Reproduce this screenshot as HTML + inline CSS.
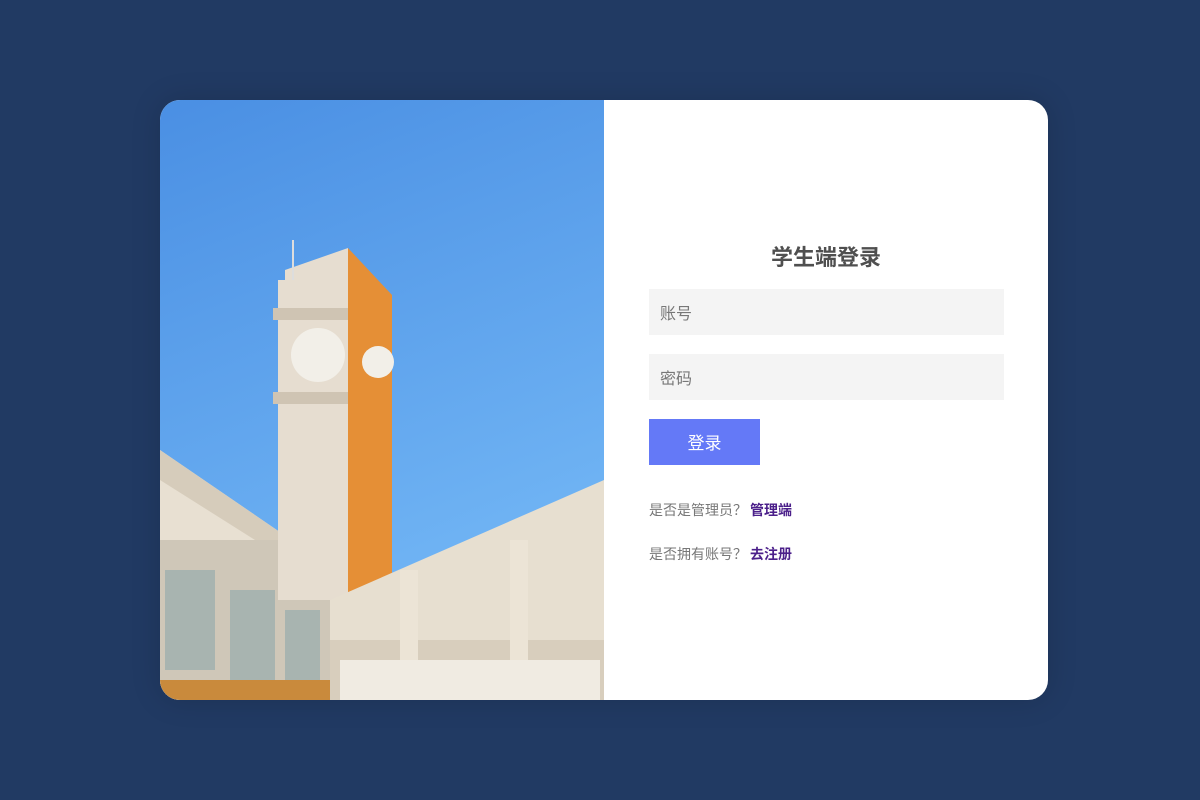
<!DOCTYPE html>
<html><head><meta charset="utf-8"><style>
html,body{margin:0;padding:0;width:1200px;height:800px;background:#213a63;overflow:hidden;font-family:"Liberation Sans","Noto Sans CJK SC",sans-serif;}
.card{position:absolute;left:160px;top:100px;width:888px;height:600px;border-radius:20px;overflow:hidden;background:#fff;box-shadow:0 0 30px rgba(0,0,0,.15);}
.pic{position:absolute;left:0;top:0;width:444px;height:600px;}
.title{position:absolute;left:444px;width:444px;top:140px;text-align:center;font-size:22px;font-weight:bold;color:#4f4f4f;}
.inp{position:absolute;left:489px;width:355px;height:46px;background:#f4f4f4;color:#777;font-size:16px;line-height:52px;text-indent:11px;}
.btn{position:absolute;left:489px;top:319px;width:111px;height:46px;background:#6479f7;color:#fff;font-size:17px;text-align:center;line-height:50px;}
.t{position:absolute;left:489px;font-size:14px;color:#777;}
.t b{color:#4b1f8a;margin-left:3px;}
</style></head><body>
<div class="card">
<svg class="pic" viewBox="0 0 444 600" width="444" height="600">
<defs><linearGradient id="s" x1="0" y1="0" x2="0.3" y2="1"><stop offset="0" stop-color="#4a8fe3"/><stop offset="1" stop-color="#74b8f6"/></linearGradient></defs>
<rect width="444" height="600" fill="url(#s)"/>
<polygon points="0,350 190,480 190,600 0,600" fill="#e8e0d2"/>
<polygon points="0,350 190,480 190,500 0,380" fill="#d6ccbb"/>
<rect x="0" y="440" width="170" height="160" fill="#cfc7b8"/>
<rect x="5" y="470" width="50" height="100" fill="#a8b4b0"/>
<rect x="70" y="490" width="45" height="90" fill="#a8b4b0"/>
<rect x="125" y="510" width="35" height="80" fill="#a8b4b0"/>
<rect x="0" y="580" width="170" height="20" fill="#c98a3c"/>
<rect x="118" y="180" width="70" height="320" fill="#e6ddd0"/>
<polygon points="188,148 232,195 232,500 188,500" fill="#e58f36"/>
<polygon points="125,170 188,148 188,180 125,180" fill="#e6ddd0"/>
<rect x="113" y="208" width="75" height="12" fill="#cfc4b3"/>
<rect x="113" y="292" width="75" height="12" fill="#cfc4b3"/>
<circle cx="158" cy="255" r="27" fill="#f2efe8"/>
<circle cx="218" cy="262" r="16" fill="#f2efe8"/>
<line x1="133" y1="140" x2="133" y2="180" stroke="#ddd" stroke-width="2"/>
<polygon points="170,500 444,380 444,600 170,600" fill="#e7dfd0"/>
<rect x="170" y="540" width="274" height="60" fill="#d8cebd"/>
<rect x="240" y="470" width="18" height="130" fill="#ece4d6"/>
<rect x="350" y="440" width="18" height="160" fill="#ece4d6"/>
<rect x="180" y="560" width="260" height="40" fill="#f0ebe2"/>
</svg>
<div class="title">学生端登录</div>
<div class="inp" style="top:189px">账号</div>
<div class="inp" style="top:254px">密码</div>
<div class="btn">登录</div>
<div class="t" style="top:400px">是否是管理员？<b>管理端</b></div>
<div class="t" style="top:444px">是否拥有账号？<b>去注册</b></div>
</div>
</body></html>
